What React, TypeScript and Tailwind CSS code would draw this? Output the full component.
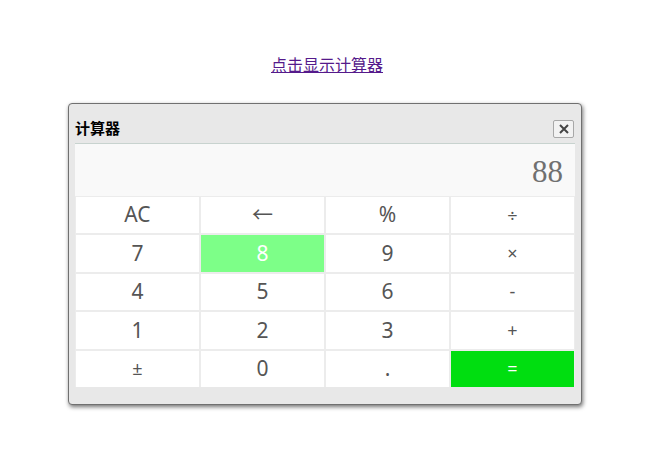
import React from "react";

type Key = { label: string; kind?: "active" | "equals"; small?: boolean };

const keys: Key[] = [
  { label: "AC" },
  { label: "←" },
  { label: "%" },
  { label: "÷", small: true },
  { label: "7" },
  { label: "8", kind: "active" },
  { label: "9" },
  { label: "×", small: true },
  { label: "4" },
  { label: "5" },
  { label: "6" },
  { label: "-", small: true },
  { label: "1" },
  { label: "2" },
  { label: "3" },
  { label: "+", small: true },
  { label: "±", small: true },
  { label: "0" },
  { label: "." },
  { label: "=", kind: "equals", small: true },
];

const sans = "font-['Noto_Sans','Noto_Sans_CJK_SC',sans-serif]";

export default function App() {
  return (
    <div className="w-[650px] h-[476px] bg-white">
      {/* 链接 */}
      <div className="pt-[52px] pl-[4px] text-center leading-[24px]">
        <a
          href="#"
          className="text-[16px] text-[#551a8b] underline font-['Noto_Sans_CJK_SC',sans-serif]"
        >
          点击显示计算器
        </a>
      </div>

      {/* 计算器弹窗 */}
      <div className="mx-auto mt-[26px] w-[514px] rounded-[4px] border border-[#707070] bg-[#e8e8e8] px-[6px] pb-[17px] shadow-[1px_2px_4px_rgba(0,0,0,0.55)]">
        <div className="flex h-[40px] items-center justify-between pt-[9px] border-b border-[#c8d3cf]">
          <span className={`text-[15px] font-bold text-black ${sans}`}>计算器</span>
          <button className="flex h-[18px] w-[21px] items-center justify-center rounded-[2px] border border-[#a8a8a8] bg-[#f2f2f2] mr-[1px] mt-[2px]">
            <svg width="10" height="10" viewBox="0 0 10 10">
              <path d="M1 1L9 9M9 1L1 9" stroke="#444" strokeWidth="2" />
            </svg>
          </button>
        </div>

        <div className="flex h-[52px] items-center justify-end bg-[#f9f9f9] pr-[12px]">
          <span className="text-[31px] leading-none text-[#707070] font-['Liberation_Serif',serif] pt-[3px]">
            88
          </span>
        </div>

        <div className="grid grid-cols-4 gap-[2px] bg-[#ececec] px-[1px] pt-[1px]">
          {keys.map((k) => (
            <div
              key={k.label}
              className={`flex h-[36.4px] items-center justify-center ${sans} ${
                k.small ? "text-[18px]" : "text-[21px]"
              } ${
                k.kind === "active"
                  ? "bg-[#7dff88] text-white"
                  : k.kind === "equals"
                  ? "bg-[#00de10] text-white"
                  : "bg-white text-[#555]"
              }`}
            >
              {k.label}
            </div>
          ))}
        </div>
      </div>
    </div>
  );
}
